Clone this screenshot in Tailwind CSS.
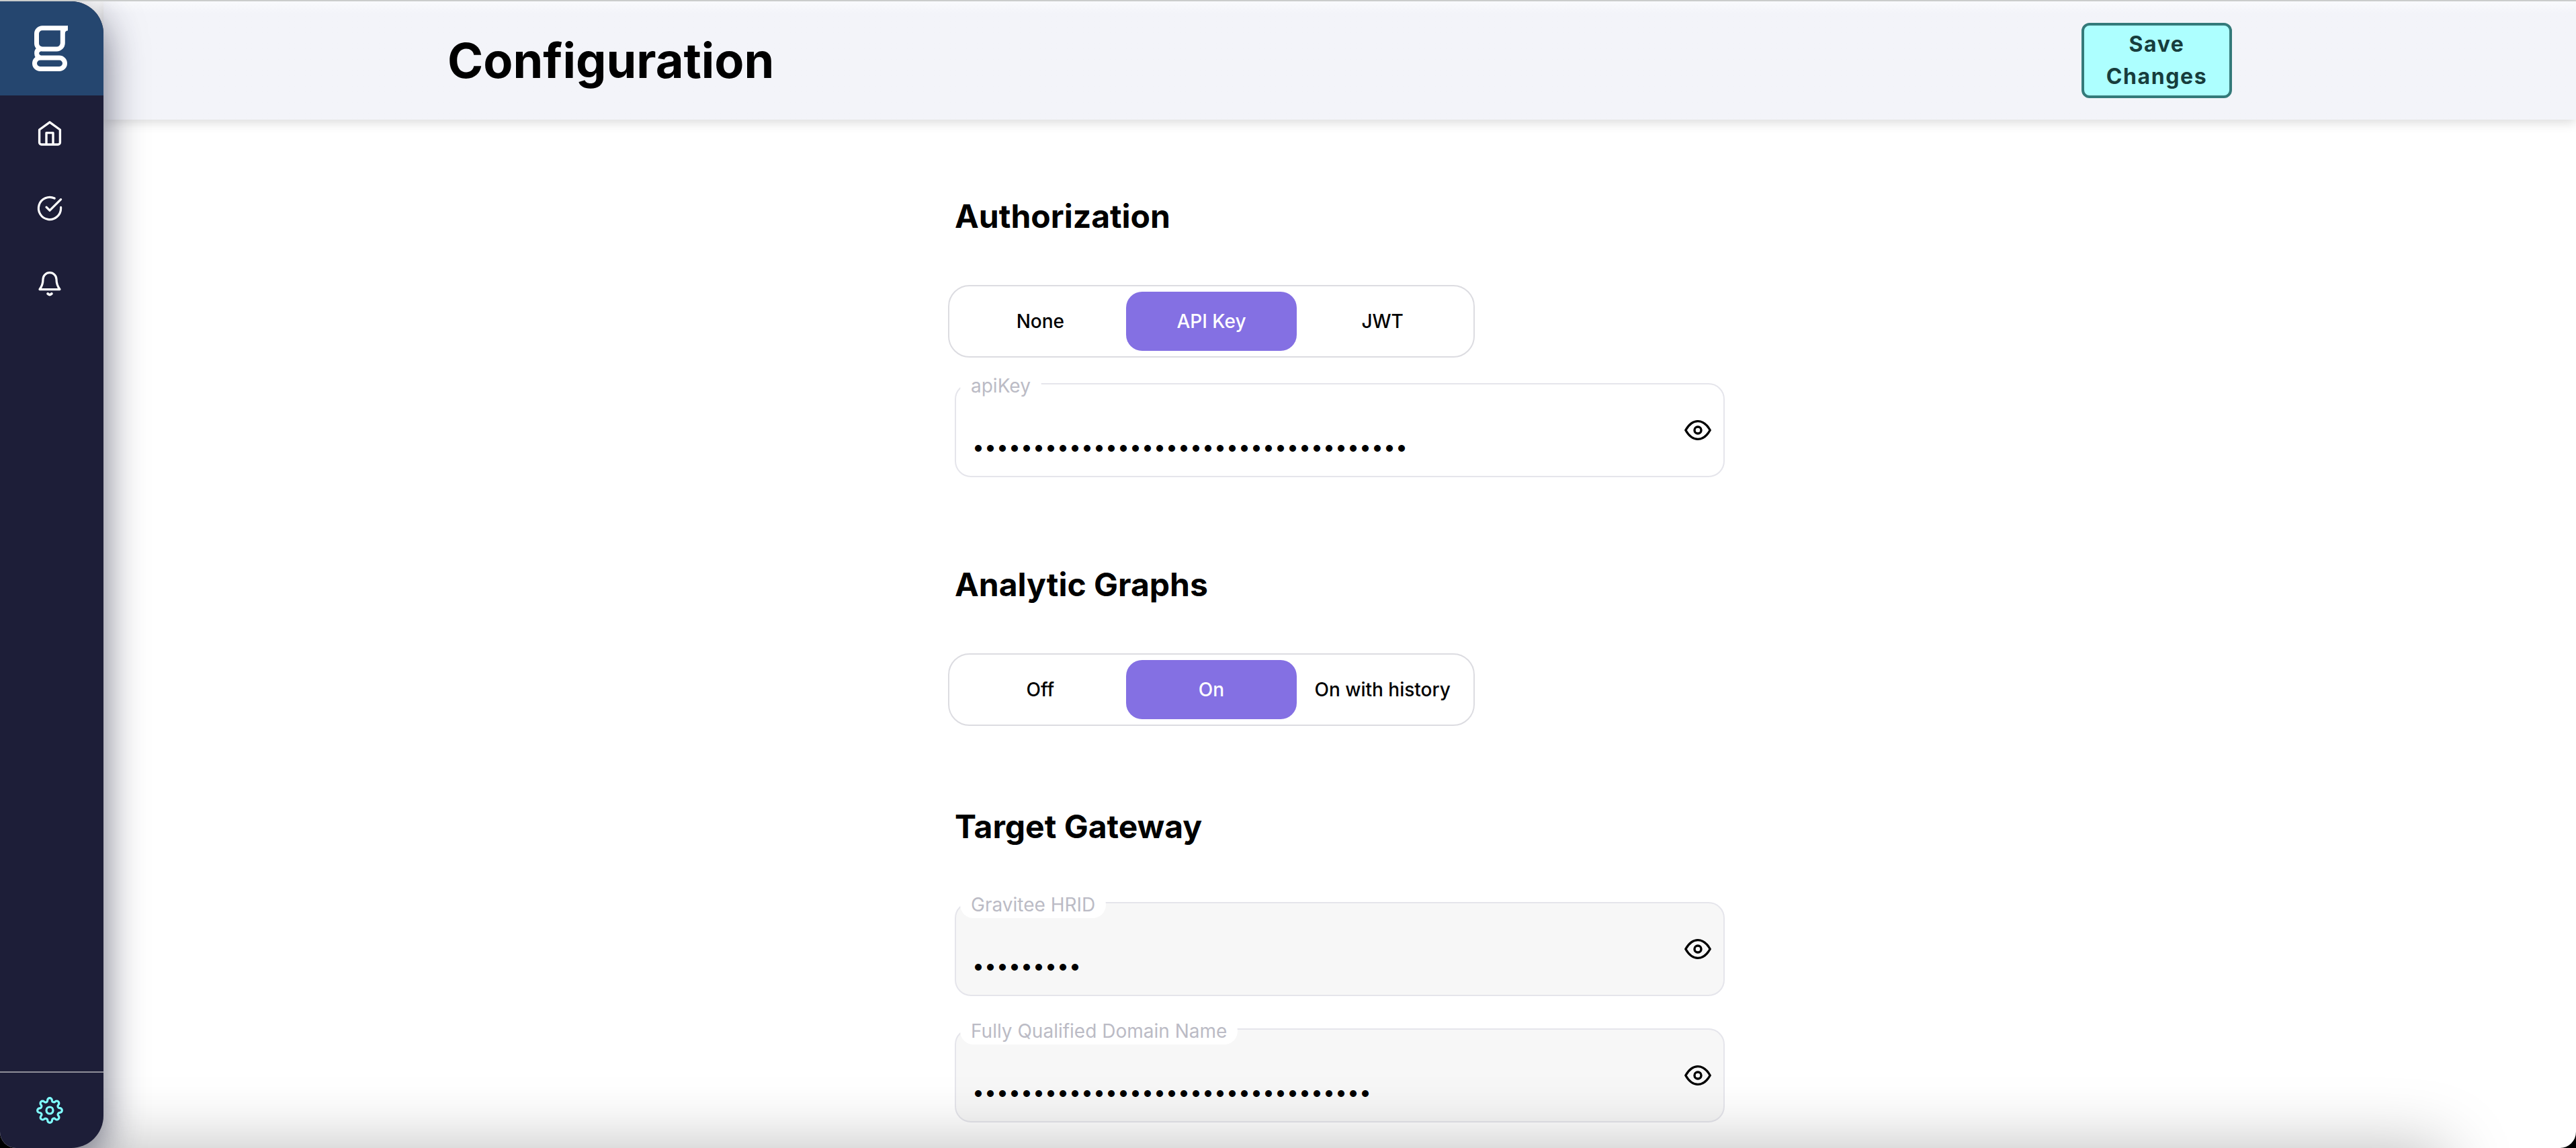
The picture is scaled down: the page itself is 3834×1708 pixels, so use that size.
<!DOCTYPE html>
<html lang="en" class="bg-black">
<head>
<meta charset="utf-8">
<title>Configuration</title>
<script src="https://cdn.jsdelivr.net/npm/@tailwindcss/browser@4"></script>
</head>
<body class="font-['Inter',sans-serif] text-black">
<div class="relative flex h-screen overflow-hidden rounded-b-[24px] border-t-2 border-[#cacccb] bg-white">

  <aside class="z-10 flex w-[154px] shrink-0 flex-col overflow-hidden rounded-r-[48px] bg-[#1d1e38] shadow-[0_20px_60px_rgba(29,30,56,0.66)]">
    <a href="#" aria-label="Gravitee" class="flex h-[140px] items-center justify-center bg-[#25466f] pr-[6px]">
      <svg class="h-[68px] w-[53px]" viewBox="47 38 53 68" fill="none" stroke="#fff" stroke-width="7">
        <path d="M62 41.7H100M100 38.2V45.2M62 41.7H92.3V64a9 9 0 0 1-9 9H62a8.5 8.5 0 0 1-8.5-8.5V50.2a8.5 8.5 0 0 1 8.5-8.5z"/>
        <path d="M100 38.2V45.2Q96 45.6 95.5 50L90 44z" fill="#fff" stroke="none"/>
        <path d="M59 73Q53.6 74 53.6 79.3Q53.6 85 59 86"/>
        <path d="M58.700 86H87.300a8.200 8.200 0 0 1 0 16.400H58.700a8.200 8.200 0 0 1 0-16.400z"/>
      </svg>
    </a>
    <nav class="flex flex-1 flex-col text-white" aria-label="Main">
      <a href="#" aria-label="Home" class="flex h-28 items-center justify-center pr-[6px]">
        <svg class="size-12" viewBox="0 0 24 24" fill="none" stroke="currentColor" stroke-width="1.7" stroke-linejoin="round"><path d="M4.300 9.500L12 3.900L19.700 9.500V19a1.500 1.500 0 0 1-1.500 1.500H5.800A1.500 1.500 0 0 1 4.300 19zM9.500 20.500V11.800h5v8.700"/></svg>
      </a>
      <a href="#" aria-label="Tasks" class="flex h-28 items-center justify-center pr-[6px]">
        <svg class="size-12" viewBox="0 0 24 24" fill="none" stroke="currentColor" stroke-width="1.6" stroke-linecap="round" stroke-linejoin="round"><path d="M20.300 11.200V12a8.300 8.300 0 1 1-4.700-7.500"/><path d="M20.300 5.300L12 13.600l-2.500-2.500"/></svg>
      </a>
      <a href="#" aria-label="Notifications" class="flex h-28 items-center justify-center pr-[6px]">
        <svg class="size-12" viewBox="0 0 24 24" fill="none" stroke="currentColor" stroke-width="1.6" stroke-linecap="round" stroke-linejoin="round"><path d="M4.500 16.300C6.300 14 7 11.800 7 8.800a5 5 0 0 1 10 0c0 3 .7 5.200 2.500 7.500z"/><path d="M10.600 19.500q1.400 1.500 2.800 0" stroke-width="2"/></svg>
      </a>
      <a href="#" aria-label="Settings" aria-current="page" class="mt-auto flex h-[114px] items-center justify-center border-t-2 border-[#8f8f99] pr-[6px] text-[#80ffff]">
        <svg class="size-10" viewBox="0 0 24 24" fill="none" stroke="currentColor" stroke-width="1.900"><circle cx="12" cy="12" r="3"/><path d="M19.400 15a1.650 1.650 0 0 0 .33 1.820l.06.06a2 2 0 0 1 0 2.830 2 2 0 0 1-2.830 0l-.06-.06a1.650 1.650 0 0 0-1.820-.33 1.650 1.650 0 0 0-1 1.510V21a2 2 0 0 1-2 2 2 2 0 0 1-2-2v-.09A1.650 1.650 0 0 0 9 19.400a1.650 1.650 0 0 0-1.820.33l-.06.06a2 2 0 0 1-2.830 0 2 2 0 0 1 0-2.830l.06-.06a1.650 1.650 0 0 0 .33-1.820 1.650 1.650 0 0 0-1.510-1H3a2 2 0 0 1-2-2 2 2 0 0 1 2-2h.09A1.650 1.650 0 0 0 4.600 9a1.650 1.650 0 0 0-.33-1.820l-.06-.06a2 2 0 0 1 0-2.830 2 2 0 0 1 2.830 0l.06.06a1.650 1.650 0 0 0 1.820.33H9a1.650 1.650 0 0 0 1-1.510V3a2 2 0 0 1 2-2 2 2 0 0 1 2 2v.09a1.650 1.650 0 0 0 1 1.510 1.650 1.650 0 0 0 1.820-.33l.06-.06a2 2 0 0 1 2.830 0 2 2 0 0 1 0 2.830l-.06.06a1.650 1.650 0 0 0-.33 1.820V9a1.650 1.650 0 0 0 1.510 1H21a2 2 0 0 1 2 2 2 2 0 0 1-2 2h-.09a1.650 1.650 0 0 0-1.510 1z"/></svg>
      </a>
    </nav>
  </aside>

  <div class="flex min-w-0 flex-1 flex-col">
    <header class="flex h-44 shrink-0 justify-center bg-linear-to-b from-[#f9fafd] to-[#f3f4f9] to-[18px] shadow-[0_4px_16px_rgba(0,0,0,0.15)]">
      <div class="flex w-full max-w-[2656px] items-center justify-between">
        <h1 class="text-[72px] leading-[88px] font-bold">Configuration</h1>
        <button type="submit" form="config" class="w-56 rounded-xl border-4 border-[#347a7a] bg-[#adffff] px-7 py-1 text-center text-[32px] leading-[48px] font-bold tracking-wider text-[#173d3d]">Save Changes</button>
      </div>
    </header>

    <main class="flex justify-center pt-28">
      <form id="config" class="flex w-full max-w-[1146px] flex-col gap-32">
        <section class="flex flex-col gap-20">
          <h2 class="text-[48px] leading-[64px] font-bold">Authorization</h2>
          <div class="flex flex-col gap-12">
            <div role="radiogroup" aria-label="Authorization" class="-m-[10px] grid w-[784px] grid-cols-3 rounded-[32px] border-2 border-[#dcdce1] p-2 text-[28px] font-medium">
              <label class="flex h-[88px] items-center justify-center rounded-3xl has-checked:bg-[#8470e3] has-checked:text-white"><input type="radio" name="auth" class="sr-only">None</label>
              <label class="flex h-[88px] items-center justify-center rounded-3xl has-checked:bg-[#8470e3] has-checked:text-white"><input type="radio" name="auth" class="sr-only" checked>API Key</label>
              <label class="flex h-[88px] items-center justify-center rounded-3xl has-checked:bg-[#8470e3] has-checked:text-white"><input type="radio" name="auth" class="sr-only">JWT</label>
            </div>
            <div class="relative flex h-[140px] items-center rounded-3xl border-2 border-[#e5e5eb] pr-[14px]">
              <label for="apikey" class="absolute -top-[18px] left-[6px] rounded-[20px] bg-white px-4 text-[28px] leading-10 text-[#bbbbc5]">apiKey</label>
              <input id="apikey" type="password" value="3f9a1c7e-52b8-4d06-9e1f-a7c4d8b26035" class="h-full min-w-0 flex-1 pt-12 pl-6 text-[32px] outline-none">
              <button type="button" aria-label="Show apiKey"><svg class="size-12" viewBox="0 0 24 24" fill="none" stroke="currentColor" stroke-width="1.700" stroke-linejoin="round"><path d="M2.900 12C5 8.300 8.300 5.300 12 5.300S19 8.300 21.100 12C19 15.700 15.700 18.700 12 18.700S5 15.700 2.900 12z"/><circle cx="12" cy="12" r="2.500"/></svg></button>
            </div>
          </div>
        </section>

        <section class="flex flex-col gap-20">
          <h2 class="text-[48px] leading-[64px] font-bold">Analytic Graphs</h2>
          <div class="flex flex-col gap-12">
            <div role="radiogroup" aria-label="Analytic Graphs" class="-m-[10px] grid w-[784px] grid-cols-3 rounded-[32px] border-2 border-[#dcdce1] p-2 text-[28px] font-medium">
              <label class="flex h-[88px] items-center justify-center rounded-3xl has-checked:bg-[#8470e3] has-checked:text-white"><input type="radio" name="graphs" class="sr-only">Off</label>
              <label class="flex h-[88px] items-center justify-center rounded-3xl has-checked:bg-[#8470e3] has-checked:text-white"><input type="radio" name="graphs" class="sr-only" checked>On</label>
              <label class="flex h-[88px] items-center justify-center rounded-3xl has-checked:bg-[#8470e3] has-checked:text-white"><input type="radio" name="graphs" class="sr-only">On with history</label>
            </div>
          </div>
        </section>

        <section class="flex flex-col gap-20">
          <h2 class="text-[48px] leading-[64px] font-bold">Target Gateway</h2>
          <div class="flex flex-col gap-12">
            <div class="relative flex h-[140px] items-center rounded-3xl border-2 border-[#e5e5eb] bg-[#f7f7f7] pr-[14px]">
              <label for="hrid" class="absolute -top-[18px] left-[6px] rounded-[20px] bg-white px-4 text-[28px] leading-10 text-[#bbbbc5]">Gravitee HRID</label>
              <input id="hrid" type="password" readonly value="apim-prod" class="h-full min-w-0 flex-1 pt-12 pl-6 text-[32px] outline-none">
              <button type="button" aria-label="Show Gravitee HRID"><svg class="size-12" viewBox="0 0 24 24" fill="none" stroke="currentColor" stroke-width="1.700" stroke-linejoin="round"><path d="M2.900 12C5 8.300 8.300 5.300 12 5.300S19 8.300 21.100 12C19 15.700 15.700 18.700 12 18.700S5 15.700 2.900 12z"/><circle cx="12" cy="12" r="2.500"/></svg></button>
            </div>
            <div class="relative flex h-[140px] items-center rounded-3xl border-2 border-[#e5e5eb] bg-[#f7f7f7] pr-[14px]">
              <label for="fqdn" class="absolute -top-[18px] left-[6px] rounded-[20px] bg-white px-4 text-[28px] leading-10 text-[#bbbbc5]">Fully Qualified Domain Name</label>
              <input id="fqdn" type="password" readonly value="gateway.prod.apim.cloud.gravitee1" class="h-full min-w-0 flex-1 pt-12 pl-6 text-[32px] outline-none">
              <button type="button" aria-label="Show Fully Qualified Domain Name"><svg class="size-12" viewBox="0 0 24 24" fill="none" stroke="currentColor" stroke-width="1.700" stroke-linejoin="round"><path d="M2.900 12C5 8.300 8.300 5.300 12 5.300S19 8.300 21.100 12C19 15.700 15.700 18.700 12 18.700S5 15.700 2.900 12z"/><circle cx="12" cy="12" r="2.500"/></svg></button>
            </div>
          </div>
        </section>
      </form>
    </main>
  </div>

  <!-- Soft shade rising from the lower edge -->
  <div class="pointer-events-none absolute right-[194px] -bottom-[200px] left-[100px] h-[200px] shadow-[0_0_100px_rgba(0,0,0,0.27)]"></div>
</div>
</body>
</html>
